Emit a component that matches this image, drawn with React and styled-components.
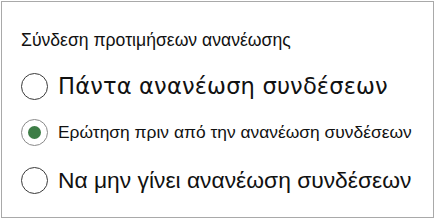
import React from "react"
import styled, { createGlobalStyle } from "styled-components"

const GlobalStyle = createGlobalStyle`
  html, body {
    margin: 0;
    padding: 0;
    background: #ffffff;
  }
  body {
    font-family: "Liberation Sans", Arial, sans-serif;
  }
`

const Panel = styled.div`
  box-sizing: border-box;
  width: 433px;
  height: 217px;
  margin: 1px 0 0 1px;
  border: 1px solid #a9a9a9;
  background: #ffffff;
  padding: 28px 0 0 19px;
  display: flex;
  flex-direction: column;
  color: #111111;
`

const Heading = styled.div`
  font-size: 17.6px;
  line-height: 20px;
  margin-bottom: 13px;
`

const Options = styled.div`
  display: flex;
  flex-direction: column;
`

const Option = styled.label`
  display: flex;
  align-items: center;
  gap: 10px;
  height: ${(p) => p.$height}px;
  font-family: ${(p) => p.$font};
  font-size: ${(p) => p.$size}px;
  letter-spacing: ${(p) => p.$spacing || 0}px;
  cursor: pointer;
`

const Radio = styled.span`
  box-sizing: border-box;
  flex: none;
  width: 27px;
  height: 27px;
  border-radius: 50%;
  border: 1.5px solid ${(p) => (p.$checked ? "#8a8a8a" : "#3a3a3a")};
  display: flex;
  align-items: center;
  justify-content: center;

  &::after {
    content: "";
    display: ${(p) => (p.$checked ? "block" : "none")};
    width: 13px;
    height: 13px;
    border-radius: 50%;
    background: #3d7d46;
  }
`

const sans = '"Liberation Sans", Arial, sans-serif'
const wide = '"DejaVu Sans", Verdana, sans-serif'

const options = [
  { label: "Πάντα ανανέωση συνδέσεων", size: 22.6, spacing: 0.15, height: 46, font: wide },
  { label: "Ερώτηση πριν από την ανανέωση συνδέσεων", size: 17.4, height: 46, font: sans, checked: true },
  { label: "Να μην γίνει ανανέωση συνδέσεων", size: 22.8, height: 50, font: sans },
]

const App = () => {
  return (
    <>
      <GlobalStyle />
      <Panel>
        <Heading>Σύνδεση προτιμήσεων ανανέωσης</Heading>
        <Options>
          {options.map((o) => (
            <Option
              key={o.label}
              $size={o.size}
              $spacing={o.spacing}
              $height={o.height}
              $font={o.font}
            >
              <Radio $checked={o.checked} />
              {o.label}
            </Option>
          ))}
        </Options>
      </Panel>
    </>
  )
}

export default App
